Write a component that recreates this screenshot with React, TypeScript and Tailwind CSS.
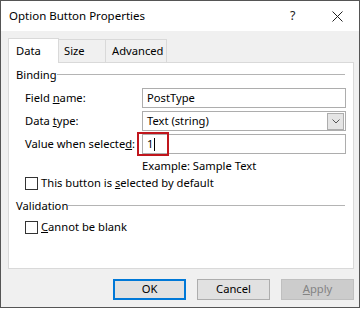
import React from "react";

const font = { fontFamily: '"Noto Sans", "Open Sans", sans-serif' };

function Checkbox() {
  return <div className="w-[13px] h-[13px] border border-[#333333] bg-white shrink-0" />;
}

function GroupHeader({ label }: { label: string }) {
  return (
    <div className="flex items-center h-[14px] pr-[8px]">
      <span className="leading-[14px] whitespace-nowrap">{label}</span>
      <div className="flex-1 h-px bg-[#b4b4b4] mt-[-1px]" />
    </div>
  );
}

export default function App() {
  return (
    <div className="w-[362px] h-[309px] bg-white text-[11.2px] text-black whitespace-nowrap" style={font}>
      <div className="w-[360px] h-[308px] border border-[#555555] bg-[#f0f0f0] flex flex-col">
        {/* Title bar */}
        <div className="h-[30px] bg-white flex items-center pl-[8px] shrink-0">
          <span className="flex-1 text-[11.5px]">Option Button Properties</span>
          <span className="w-[20px] text-[12.5px] mr-[22px] text-[#222]">?</span>
          <svg width="11" height="11" viewBox="0 0 11 11" className="mr-[16px]">
            <path d="M0.5 0.5 L10.5 10.5 M10.5 0.5 L0.5 10.5" stroke="#222" strokeWidth="1" />
          </svg>
        </div>
        {/* Body */}
        <div className="flex-1 flex flex-col pl-[7px] pr-[5px] pt-[7px]">
          {/* Tabs */}
          <div className="flex items-end h-[24px] relative z-10">
            <div className="w-[51px] h-[25px] bg-white border border-[#d9d9d9] border-b-0 pl-[7px] pt-[4px] mb-[-1px]">Data</div>
            <div className="w-[47px] h-[23px] border border-[#d9d9d9] border-l-0 border-b-0 pl-[5px] pt-[3px]">Size</div>
            <div className="w-[61px] h-[23px] border border-[#d9d9d9] border-l-0 border-b-0 pl-[6px] pt-[3px]">Advanced</div>
          </div>
          <div className="h-[207px] bg-white border border-[#d9d9d9] flex flex-col pl-[7px] pt-[5px]">
            <GroupHeader label="Binding" />
            <div className="flex flex-col pl-[9px] pr-[7px]">
              <div className="flex items-center h-[20px] mt-[6px]">
                <span className="w-[117px] shrink-0">Field <u>n</u>ame:</span>
                <div className="flex-1 h-[20px] border border-[#adadad] pl-[4px] leading-[18px]">PostType</div>
              </div>
              <div className="flex items-center h-[20px] mt-[3px]">
                <span className="w-[117px] shrink-0">Data <u>t</u>ype:</span>
                <div className="flex-1 h-[20px] border border-[#adadad] pl-[4px] leading-[18px] flex items-center">
                  <span className="flex-1">Text (string)</span>
                  <div className="w-[17px] h-[17px] bg-[#e5e5e5] border border-[#adadad] flex items-center justify-center mr-px">
                    <svg width="8" height="5" viewBox="0 0 8 5">
                      <path d="M0.5 0.5 L4 4 L7.5 0.5" stroke="#555" strokeWidth="1" fill="none" />
                    </svg>
                  </div>
                </div>
              </div>
              <div className="flex items-center h-[20px] mt-[3px]">
                <span className="w-[117px] shrink-0">Value when selecte<u>d</u>:</span>
                <div className="flex-1 h-[20px] border border-[#adadad] pl-[4px] leading-[18px] relative">
                  <span>1</span>
                  <span className="inline-block w-px h-[13px] bg-black align-middle ml-px mt-[-2px]" />
                  <div className="absolute left-[-6px] top-[-3px] w-[32px] h-[24px] border-2 border-[#c0161d]" />
                </div>
              </div>
              <div className="h-[16px] mt-[4px] pl-[117px] leading-[16px]">Example: Sample Text</div>
              <div className="flex items-center h-[16px] mt-px gap-[3px]">
                <Checkbox />
                <span>This button is <u>s</u>elected by default</span>
              </div>
            </div>
            <div className="mt-[8px]">
              <GroupHeader label="Validation" />
            </div>
            <div className="flex items-center h-[16px] mt-[6px] gap-[3px] pl-[9px]">
              <Checkbox />
              <span><u>C</u>annot be blank</span>
            </div>
          </div>
          {/* Buttons */}
          <div className="flex justify-end gap-[11px] mt-[10px]">
            <div className="w-[73px] h-[21px] border-2 border-[#0078d7] bg-[#e1e1e1] flex items-center justify-center">OK</div>
            <div className="w-[73px] h-[21px] border border-[#adadad] bg-[#e1e1e1] flex items-center justify-center">Cancel</div>
            <div className="w-[73px] h-[21px] border border-[#bfbfbf] bg-[#cccccc] text-[#838383] flex items-center justify-center"><span><u>A</u>pply</span></div>
          </div>
        </div>
      </div>
    </div>
  );
}
